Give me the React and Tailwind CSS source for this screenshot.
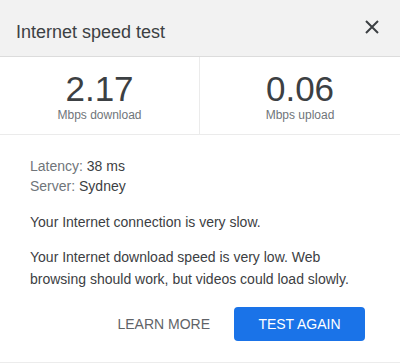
import React from "react";

const SPEED = {
  download: "2.17",
  upload: "0.06",
  latency: "38 ms",
  server: "Sydney",
};

const Stat = ({ value, label, divider }) => (
  <div
    className={`flex flex-col items-center pt-[12px] ${
      divider ? "border-r border-[#ebebeb]" : ""
    }`}
  >
    <span className="text-[35px] leading-[39px] text-[#3c4043]">{value}</span>
    <span className="text-[12px] leading-[14px] text-[#70757a]">{label}</span>
  </div>
);

const App = () => {
  return (
    <div
      className="w-[400px] h-[363px] bg-white flex flex-col border-b border-[#ececec]"
      style={{ fontFamily: '"Liberation Sans", Arial, sans-serif' }}
    >
      {/* header */}
      <div className="h-[57px] bg-[#f2f2f2] border-b border-[#dcdcdc] flex items-start justify-between">
        <h1 className="pl-4 pt-[20px] text-[18px] leading-[24px] text-[#3c4043]">
          Internet speed test
        </h1>
        <button className="mt-[20px] mr-[21px] text-[#3c4043]">
          <svg width="14" height="14" viewBox="0 0 14 14">
            <path
              d="M1 1L13 13M13 1L1 13"
              stroke="currentColor"
              strokeWidth="2"
              fill="none"
            />
          </svg>
        </button>
      </div>

      {/* results */}
      <div className="grid grid-cols-2 h-[78px] border-b border-[#ebebeb]">
        <Stat value={SPEED.download} label="Mbps download" divider />
        <Stat value={SPEED.upload} label="Mbps upload" />
      </div>

      {/* details */}
      <div className="px-[30px] pt-[21px] text-[14px] text-[#3c4043]">
        <div className="leading-[20px]">
          <p>
            <span className="text-[#70757a]">Latency:</span> {SPEED.latency}
          </p>
          <p>
            <span className="text-[#70757a]">Server:</span> {SPEED.server}
          </p>
        </div>
        <p className="mt-[16px] leading-[20px]">
          Your Internet connection is very slow.
        </p>
        <p className="mt-[14px] leading-[22px]">
          Your Internet download speed is very low. Web browsing should work,
          but videos could load slowly.
        </p>

        <div className="mt-[17px] mr-[5px] flex justify-end gap-2">
          <button className="h-[34px] px-4 text-[14px] text-[#5f6368]">
            LEARN MORE
          </button>
          <button className="h-[34px] w-[131px] rounded-[4px] bg-[#1a73e8] text-[14px] text-white">
            TEST AGAIN
          </button>
        </div>
      </div>
    </div>
  );
};

export default App;
